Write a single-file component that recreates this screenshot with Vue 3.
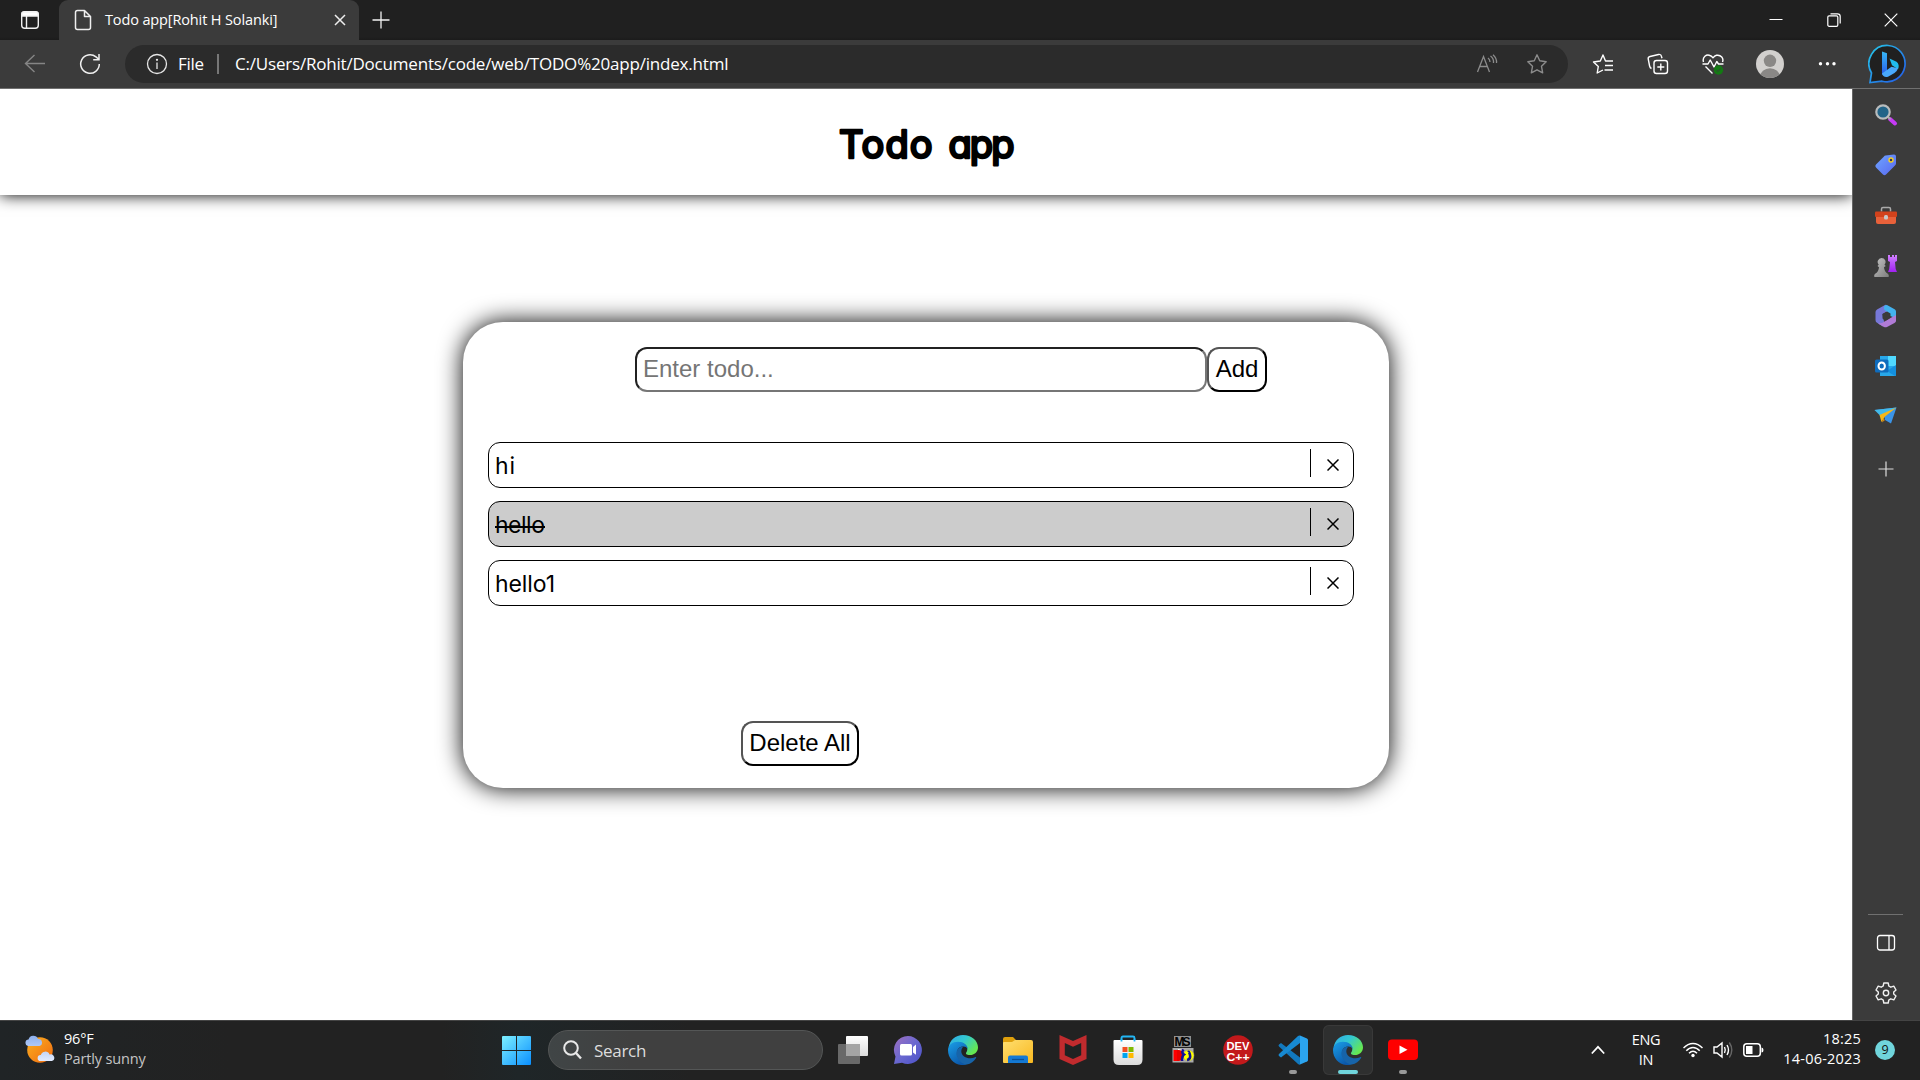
<script setup>
import { ref } from 'vue'

const todos = ref([
  { text: 'hi', done: false, width: 20 },
  { text: 'hello', done: true, width: 50 },
  { text: 'hello1', done: false, width: 60 },
])
</script>

<template>
  <div class="screen">
    <svg class="defs" width="0" height="0">
      <defs>
        <linearGradient id="win" x1="0" y1="0" x2="1" y2="1"><stop offset="0" stop-color="#7df0ff" /><stop offset="1" stop-color="#0a8fff" /></linearGradient>
        <linearGradient id="sun" x1="0" y1="0" x2="1" y2="1"><stop offset="0" stop-color="#fbb020" /><stop offset="1" stop-color="#f06a10" /></linearGradient>
        <linearGradient id="cloud" x1="0" y1="0" x2="0" y2="1"><stop offset="0" stop-color="#8db0ee" /><stop offset="1" stop-color="#e2ebff" /></linearGradient>
        <linearGradient id="edgeTop" x1="0" y1="0" x2="1" y2=".6"><stop offset="0" stop-color="#2fa8e8" /><stop offset=".5" stop-color="#33c8d0" /><stop offset="1" stop-color="#66e850" /></linearGradient>
        <linearGradient id="edgeLow" x1="0" y1="0" x2=".6" y2="1"><stop offset="0" stop-color="#1a9fe8" /><stop offset="1" stop-color="#0b56a8" /></linearGradient>
        <linearGradient id="chat" x1="0" y1="0" x2="1" y2="1"><stop offset="0" stop-color="#a070c0" /><stop offset=".5" stop-color="#6a68d0" /><stop offset="1" stop-color="#4a50c8" /></linearGradient>
        <linearGradient id="fold" x1="0" y1="0" x2="1" y2="1"><stop offset="0" stop-color="#ffdf70" /><stop offset="1" stop-color="#f8b820" /></linearGradient>
        <linearGradient id="tag" x1="0" y1="0" x2="1" y2="1"><stop offset="0" stop-color="#6fa6ff" /><stop offset="1" stop-color="#5867f0" /></linearGradient>
        <linearGradient id="bing" x1="0" y1="0" x2="1" y2="1"><stop offset="0" stop-color="#25c8e8" /><stop offset="1" stop-color="#2458e8" /></linearGradient>
        <linearGradient id="bl" x1="0" y1="0" x2="0" y2="1"><stop offset="0" stop-color="#36b8f5" /><stop offset="1" stop-color="#2a5cea" /></linearGradient>
        <linearGradient id="purple" x1="0" y1="0" x2="0" y2="1"><stop offset="0" stop-color="#d080ff" /><stop offset="1" stop-color="#a020f0" /></linearGradient>
        <linearGradient id="pawn" x1="0" y1="0" x2="1" y2="1"><stop offset="0" stop-color="#c4c4c4" /><stop offset="1" stop-color="#7d7d7d" /></linearGradient>
        <linearGradient id="sheet" x1="0" y1="0" x2="0" y2="1"><stop offset="0" stop-color="#fff" /><stop offset="1" stop-color="#dcdcdc" /></linearGradient>
        <symbol id="edge" viewBox="0 0 30 30">
          <path d="M.6 12.6C1.600 5.200 7.500 0 15 0c8.700 0 15 6 15 12.200 0 4.700-3.600 7.800-8.200 7.800-3.300 0-4.600-1.300-3.400-2.700 2.300-3 .6-9.500-7-9.800C6.600 7.300 2.200 9.600.6 12.600Z" fill="url(#edgeTop)" />
          <path d="M0 15c0-4.800 4.500-8.200 10-8.200 6 0 9.500 3.300 9.800 7.200-1-1.700-2.500-2.500-4.300-2.500C9 11.500 7 18 11.200 24c2 2.900 4.600 4.800 7.300 5.600C8.500 32 0 25 0 15Z" fill="url(#edgeLow)" />
          <path d="M15.500 11.500C10 12 7 16.500 9 21.500c1.700 4.700 6 8 9.800 8.100 4-1 7.400-3.400 9.300-6.700.4-.8-.3-1-1-.6C21 25 13.500 22 13.300 16.500c0-2 .8-3.700 2.200-5Z" fill="#1764a9" />
        </symbol>
      </defs>
    </svg>

    <header class="tabs">
      <div class="spaces">
        <svg width="20" height="20" viewBox="0 0 20 20" fill="none" stroke="#f2f2f2" stroke-width="1.4"><rect x="1.700" y="1.700" width="16.600" height="16.600" rx="3" /><path d="M2 3.500Q2 2 4 2h12q2 0 2 1.500V6H2Z" fill="#fff" /><path d="M6.500 6v12" /></svg>
      </div>
      <div class="tab">
        <svg width="18" height="22" viewBox="0 0 18 22" fill="none" stroke="#eee" stroke-width="1.500" stroke-linejoin="round"><path d="M3.500 1.500h7l6 6v11q0 2-2 2h-11q-2 0-2-2v-15q0-2 2-2ZM10.500 1.500v6h6" /></svg>
        <span class="title">Todo app[Rohit H Solanki]</span>
        <svg class="x" width="12" height="12" viewBox="0 0 12 12" stroke="#eee" stroke-width="1.500"><path d="m1 1 10 10M11 1 1 11" /></svg>
      </div>
      <svg class="new" width="18" height="18" viewBox="0 0 18 18" stroke="#f2f2f2" stroke-width="1.300"><path d="M9 .5v17M.5 9h17" /></svg>
      <div class="winbtns">
        <svg width="14" height="14" viewBox="0 0 14 14"><path d="M.5 6.500h13" stroke="#fff" stroke-width="1" /></svg>
        <svg width="14" height="14" viewBox="0 0 14 14" fill="none" stroke="#fff" stroke-width="1.200"><rect x=".8" y="2.800" width="10" height="10.500" rx="1.300" /><path d="M3.500.8h7q2.700 0 2.700 2.700v7" /></svg>
        <svg width="14" height="14" viewBox="0 0 14 14" stroke="#fff" stroke-width="1.200"><path d="m.7.7 12.600 12.600M13.300.7.7 13.300" /></svg>
      </div>
    </header>

    <nav class="toolbar">
      <svg class="back" width="22" height="20" viewBox="0 0 22 20" fill="none" stroke="#858585" stroke-width="1.400"><path d="M21 9.500H1.500M10.500 1 1.500 9.500l9 8.500" /></svg>
      <svg class="reload" width="22" height="22" viewBox="0 0 22 22" fill="none" stroke="#f0f0f0" stroke-width="1.500"><path d="M20.300 11A9.300 9.300 0 1 1 17 3.900L20 6.500M20 1v5.800h-5.800" /></svg>
      <div class="address">
        <svg class="info" width="22" height="22" viewBox="0 0 22 22" fill="none" stroke="#e6e6e6" stroke-width="1.300"><circle cx="11" cy="11" r="9.500" /><path d="M11 9.500V16" /><circle cx="11" cy="6.800" r=".5" fill="#e6e6e6" /></svg>
        <span class="file">File</span>
        <i class="bar"></i>
        <span class="url">C:/Users/Rohit/Documents/code/web/TODO%20app/index.html</span>
        <svg class="read" width="22" height="20" viewBox="0 0 22 20" fill="none" stroke="#8c8c8c" stroke-width="1.300"><path d="m1.500 18 6-15.500 6 15.500M3.700 12.500h7.600M12 4q2 1.500 2 4M14.500 2q3.500 2.500 3 7M17 .8q4 3.500 3.500 8.200" /></svg>
        <svg class="fav" width="22" height="22" viewBox="0 0 24 24" fill="none" stroke="#8c8c8c" stroke-width="1.500" stroke-linejoin="round"><path d="m12 2 3 6.500 7 1-5.100 5 1.300 7.200L12 18.300l-6.200 3.400 1.300-7.200L2 9.500l7-1Z" /></svg>
      </div>
      <div class="tools">
        <svg width="22" height="22" viewBox="0 0 22 22" fill="none" stroke="#fff" stroke-width="1.400" stroke-linejoin="round"><path d="M21 8h-7.500L11 2 8.300 8l-6.800 1L6.300 13.500 5.200 20l5.800-3M13 12.500h8M12.500 17H21" /></svg>
        <svg width="22" height="22" viewBox="0 0 22 22" fill="none" stroke="#fff" stroke-width="1.400"><rect x="7" y="7.500" width="13.500" height="13" rx="2.500" /><path d="M13.800 10.500v7M10.300 14h7M4.500 15.500Q3 15 2.600 13L1.200 6Q.9 4 3 3.500L11.500 1.500Q14 1 14.500 3.500L15 5.200" /></svg>
        <svg width="22" height="22" viewBox="0 0 22 22" fill="none" stroke="#fff" stroke-width="1.400" stroke-linejoin="round"><path d="M1.500 9C0 4 4.500 1 8 2.500q1.800.7 3 2.300Q12.500 2.800 14.500 2.300C19 1.500 22 5.500 20.500 9M.5 11H6l2.200-4L12 14l2.800-5.500L16.500 11h5M3.500 13.500l7 7" /><circle cx="16.500" cy="17" r="4.700" fill="#137a13" stroke="none" /><path d="m14.300 17 1.600 1.500 2.800-3" stroke="#3b3b3b" stroke-width="1" /></svg>
        <svg class="avatar" width="28" height="28" viewBox="0 0 28 28"><defs><clipPath id="av"><circle cx="14" cy="14" r="14" /></clipPath></defs><g clip-path="url(#av)"><path d="M0 0h28v28H0z" fill="#d2d0ce" /><circle cx="14" cy="10.800" r="6.200" fill="#8a8886" /><ellipse cx="14" cy="27" rx="10" ry="8.800" fill="#8a8886" /></g></svg>
        <svg width="18" height="6" viewBox="0 0 18 6" fill="#fff"><circle cx="2.500" cy="2.700" r="1.700" /><circle cx="9.500" cy="2.700" r="1.700" /><circle cx="16" cy="2.700" r="1.700" /></svg>
        <svg class="bing" width="40" height="40" viewBox="0 0 40 40"><path d="M20 1.500A18.200 18.200 0 1 1 14 37.200L2 38.500 3.500 29A18.200 18.200 0 0 1 20 1.500Z" fill="#202020" stroke="url(#bing)" stroke-width="1.700" /><path d="M14 7.500 19 9.300v18L14 31Z" fill="url(#bl)" /><path d="m21.500 14.500 7 3.200q3.500 3 1.500 7.500l-6-4Z" fill="#20bdf0" /><path d="m14 29.500 9.500-6.800 6.600 1.500q-1 3-3.600 4.700L20 32.700q-5 1-6-3.200Z" fill="#49a9fb" /></svg>
      </div>
    </nav>

    <div class="middle">
      <main class="page">
        <div class="heading">
          <h1><svg width="184" height="60" viewBox="0 0 184 60" aria-label="Todo app"><text x="5" y="40" textLength="93.500" class="word">Todo</text><text x="114.500" y="40" textLength="66" class="word">app</text></svg></h1>
        </div>
        <section class="card">
          <div class="entry">
            <input type="text" placeholder="Enter todo..." />
            <button>Add</button>
          </div>
          <ul>
            <li v-for="t in todos" :key="t.text" :class="{ done: t.done }">
              <svg class="label" width="120" height="36"><text x="0" y="25" :textLength="t.width">{{ t.text }}</text><path v-if="t.done" :d="`M0 19h${t.width}`" /></svg>
              <span class="remove"><svg width="12" height="12" viewBox="0 0 12 12"><path d="m.5.5 11 11M11.500.5l-11 11" stroke="#000" stroke-width="1.500" /></svg></span>
            </li>
          </ul>
          <button class="clear">Delete All</button>
        </section>
      </main>

      <aside class="side">
        <svg width="24" height="24" viewBox="0 0 24 24"><path d="m16 16 5 4.500" stroke="#c63af5" stroke-width="4" stroke-linecap="round" /><path d="m13.500 13.500 3 2.800" stroke="#aaa" stroke-width="2" /><circle cx="9" cy="9" r="6.700" fill="#226488" stroke="#b9bcbd" stroke-width="2.200" /></svg>
        <svg width="24" height="24" viewBox="0 0 24 24"><path d="M11.500 2.500 20 1.500q2 0 2 2v7q0 1-1 2l-9 9q-1.500 1.500-3 0L2 14.500q-1.500-1.500 0-3l8-8q.5-.8 1.500-1Z" fill="url(#tag)" /><circle cx="17" cy="7" r="2" fill="#303060" stroke="#f5d020" stroke-width="1.400" /></svg>
        <svg width="24" height="24" viewBox="0 -1 24 24"><path d="M7.500 7.500V5q0-1.500 1.500-1.500h6Q16.500 3.500 16.500 5v2.500" fill="none" stroke="#aaa" stroke-width="1.500" /><path d="M2 12h20v6q0 2-2 2H4q-2 0-2-2Z" fill="#e8613a" /><path d="M1 8.500q0-1 1-1h20q1 0 1 1V12q0 1-1 1H2q-1 0-1-1Z" fill="#d2421c" /><rect x="10" y="11" width="4" height="4.500" rx="1.500" fill="#c8c8c8" /></svg>
        <svg width="24" height="24" viewBox="0 0 24 24"><path d="M14 1h2v2h2V1h2v2h1V1h2v6l-2 1 .7 7 1.300 3h-9l1.200-3 .8-7-2-1Z" fill="url(#purple)" /><path d="M7.500 4a4 4 0 0 1 3 6.700l1.300 1.300-1.800 1.200q.3 4.300 3.500 6.300 2 1.500 1 3.500h-14q-1-2 1-3.500 3.200-2 3.500-6.300L3.500 12l1.200-1.300A4 4 0 0 1 7.500 4Z" fill="url(#pawn)" /></svg>
        <svg width="24" height="24" viewBox="0 0 24 24"><path d="M11 1 3 5.500Q1.500 6.500 1.500 8v8q0 2 1.500 2.800l6 3.700q2-4 .3-7.500L8.500 10 13 7.500V2Q12.500 0 11 1Z" fill="#7778d8" /><path d="m11 1.500 2-.5 8 4.500q1 .8 1 2v7L16.500 12V9.500L10.500 6Q9 3 11 1.500Z" fill="#42b2ee" /><path d="M22 11v6q0 1-1.500 2l-7.500 4q-1.500.7-3 0L4 19.500l4-.5 8.500-5Z" fill="#b07bd6" /><path d="M12 8 15.500 10v4.500L12 16.500 8.500 14.500V10Z" fill="#3b3b3b" /></svg>
        <svg width="24" height="24" viewBox="0 0 24 24"><path d="M6 2h15q1 0 1 1v18q0 1-1 1H6Z" fill="#28a8ea" /><path d="M14 2h8v10h-8Z" fill="#50d9ff" /><path d="m13 17 9-6v10q0 1-1 1Z" fill="#1490df" /><rect x="1" y="5.500" width="13.500" height="13" rx="1.500" fill="#0f6cbd" /><ellipse cx="7.700" cy="12" rx="3.200" ry="3.600" fill="none" stroke="#fff" stroke-width="2" /></svg>
        <svg width="24" height="24" viewBox="0 0 24 24"><path d="M.5 6 22.500 3.500 17 19.500 11 16 10 10Z" fill="#3b94e8" /><path d="M.5 6 22.500 3.500 6 11.500Z" fill="#42b9ea" /><path d="M22.500 3.500 5.500 11l2 7L11 12.500Z" fill="#f7b716" /><path d="m9 14.500-1 4 3-2.500Z" fill="#d88b12" /></svg>
        <svg class="plus" width="16" height="16" viewBox="0 0 16 16" stroke="#ddd" stroke-width="1.200"><path d="M8 .5v15M.5 8h15" /></svg>
        <div class="bottom">
          <svg width="20" height="18" viewBox="0 0 20 18" fill="none" stroke="#fff" stroke-width="1.300"><rect x="1.500" y="1.500" width="17" height="14.500" rx="2.500" /><path d="M13 1.500V16" /></svg>
          <svg width="22" height="22" viewBox="0 0 22 22" fill="none" stroke="#f0f0f0" stroke-width="1.400" stroke-linejoin="round"><circle cx="11" cy="11" r="2.700" /><path d="M8.800 1h4.400l.6 3 2 1.200 3-1 2.200 3.800L18.700 10v2l2.300 2-2.200 3.800-3-1-2 1.200-.6 3H8.800l-.6-3-2-1.200-3 1L1 14l2.300-2v-2L1 8l2.200-3.800 3 1L8.200 4Z" /></svg>
        </div>
      </aside>
    </div>

    <footer class="taskbar">
      <div class="weather">
        <svg width="30" height="30" viewBox="0 0 30 30"><circle cx="15" cy="15" r="12.800" fill="url(#sun)" /><path d="M3 11A3.300 3.300 0 0 1 3.500 4.500 5 5 0 0 1 13 4a3.600 3.600 0 0 1 1.500 7ZM15.500 26a3 3 0 0 1 .3-6 4.600 4.600 0 0 1 8.700-.5 3.300 3.300 0 0 1 2.500 6.500Z" fill="url(#cloud)" /></svg>
        <div class="report"><b>96°F</b><span>Partly sunny</span></div>
      </div>
      <svg class="start" width="29" height="29" viewBox="0 0 29 29" fill="url(#win)"><path d="M1 0h13v14H0V1Q0 0 1 0ZM15 0h13q1 0 1 1v13H15ZM0 15h14v14H1q-1 0-1-1ZM15 15h14v13q0 1-1 1H15Z" /></svg>
      <div class="search">
        <svg width="19" height="20" viewBox="0 0 19 20" fill="none" stroke="#e8e8e8" stroke-width="2"><circle cx="8" cy="8" r="6.800" /><path d="m13 13 5 5.500" stroke-width="2.400" /></svg>
        <span>Search</span>
      </div>
      <div class="apps">
        <div class="app"><svg width="30" height="30" viewBox="0 0 30 30"><rect x="8" y="1" width="22" height="20" rx="1" fill="url(#sheet)" /><rect y="9" width="22" height="20" rx="1" fill="#696969" /><path d="M8 9h14v12H8Z" fill="#a5a5a5" /></svg></div>
        <div class="app"><svg width="30" height="30" viewBox="0 0 30 30"><path d="M15 1a14 14 0 1 1-6 26.700L1 29l1.500-7.500A14 14 0 0 1 15 1Z" fill="url(#chat)" /><rect x="7" y="9" width="12" height="11.500" rx="1.500" fill="#fff" /><path d="m20 12 3-2.500v10.300L20 17.500Z" fill="#fff" /></svg></div>
        <div class="app"><svg width="30" height="30"><use href="#edge" /></svg></div>
        <div class="app"><svg width="30" height="30" viewBox="0 0 30 30"><path d="M0 4q0-2 2-2h8l3 3h15v9H0Z" fill="#dfa00c" /><path d="M0 8q0-1 1-1h8l3-2h16q2 0 2 2v20q0 1-1 1H1q-1 0-1-1Z" fill="url(#fold)" /><path d="M5 28v-5.500q0-2 2-2h16q2 0 2 2V28Z" fill="#1479d4" /><path d="M9 24.500h12" stroke="#0b4f94" stroke-width="1.300" /></svg></div>
        <div class="app"><svg width="30" height="30" viewBox="0 0 30 30"><path d="m1.500 0 13.500 6 13.500-6v24L15 30 1.500 24Z" fill="#c12b2e" /><path d="m6.800 8 8.200 3.700L23.200 8v12.300L15 24l-8.200-3.700Z" fill="#202222" /></svg></div>
        <div class="app"><svg width="30" height="30" viewBox="0 0 30 30"><path d="M8.500 7V3q0-1.500 1.500-1.500h10q1.500 0 1.500 1.500v4" fill="none" stroke="#22b6f4" stroke-width="1.800" /><path d="M.5 6q0-1 1-1h27q1 0 1 1v18.500q0 5.500-5.500 5.500H6Q.5 30 .5 24.500Z" fill="url(#sheet)" /><path d="M8.500 3.500V6.500M21.500 3.500V6.500" stroke="#22b6f4" stroke-width="1.800" /><path d="M9.500 12h5v5h-5Z" fill="#f25022" /><path d="M15.500 12h5v5h-5Z" fill="#7fba00" /><path d="M9.500 18h5v5h-5Z" fill="#00a4ef" /><path d="M15.500 18h5v5h-5Z" fill="#ffb900" /></svg></div>
        <div class="app"><svg width="26" height="30" viewBox="0 0 26 30"><rect x="4" y="1" width="17" height="11" fill="#909090" /><text x="4.500" y="11" textLength="16" class="ms">MS</text><rect x="2.500" y="13" width="21" height="14.500" fill="#aaa" /><path d="M3.500 15H10v11H3.500Z" fill="#f00" /><path d="M8 14q7 1 7 6.500T8 26Z" fill="#fff" /><path d="M7 15h2q5 .5 5 5.500T9 26H7Z" fill="#e80000" /><circle cx="18.500" cy="20.500" r="5.500" fill="#ff0" stroke="#888" stroke-width=".5" /><path d="M12 26q0-5 2-6.500-3-2-.5-5M17 25q4-1 3-5t-2-3" fill="none" stroke="#101098" stroke-width="2.600" /></svg></div>
        <div class="app"><svg width="30" height="30" viewBox="0 0 30 30"><circle cx="15" cy="15" r="14.800" fill="#c2191b" /><text x="3.500" y="14.500" textLength="23" lengthAdjust="spacingAndGlyphs" class="dev">DEV</text><text x="3.500" y="25.500" textLength="23" lengthAdjust="spacingAndGlyphs" class="dev">C++</text></svg></div>
        <div class="app run"><svg width="30" height="30" viewBox="0 0 30 30"><path d="m22 .5 7 3q1 .5 1 1.500v20q0 1-1 1.500l-7 3Z" fill="#2ba4ef" /><path d="M1 9.500 3 8l19 14.500v7.300q-1 .2-2-.8L1 11.500q-1-1 0-2Z" fill="#1278bd" /><path d="M22 .5V8L3 22.500 1 21q-1-1 0-2L20 1q1-.9 2-.5Z" fill="#1789d1" /></svg></div>
        <div class="app active"><svg width="30" height="30"><use href="#edge" /></svg></div>
        <div class="app run"><svg width="30" height="30" viewBox="0 0 30 30"><rect y="4.500" width="30" height="20.500" rx="4" fill="#f00" /><path d="M11.500 10.500v8.500l8-4.250Z" fill="#fff" /></svg></div>
      </div>
      <div class="tray">
        <svg class="chev" width="14" height="10" viewBox="0 0 14 10" fill="none" stroke="#fff" stroke-width="1.700"><path d="m.8 8.500 6.200-6.700 6.200 6.700" /></svg>
        <div class="lang">ENG<br />IN</div>
        <svg class="wifi" width="20" height="16" viewBox="0 0 20 16" fill="none" stroke="#fff" stroke-width="1.500"><path d="M.5 6Q4.800 1.500 10 1.500T19.500 6M3.300 8.700Q6.300 5.400 10 5.400t6.700 3.300M6 11.300q4-4 8 0" /><circle cx="10" cy="13.500" r="1.700" fill="#fff" stroke="none" /></svg>
        <svg class="vol" width="20" height="18" viewBox="0 0 20 18" fill="none" stroke="#fff" stroke-width="1.400"><path d="M1 6v6h3l5 4V2L4 6ZM11.500 6q1.500 3 0 6M14 4q3 5 0 10" /><path d="M16.300 1.500q5 7.500 0 15" stroke="#666" /></svg>
        <svg class="bat" width="21" height="14" viewBox="0 0 21 14"><rect x=".8" y=".8" width="16.500" height="12.400" rx="3" fill="none" stroke="#fff" stroke-width="1.500" /><rect x="3" y="3" width="6.500" height="8" fill="#fff" /><path d="M18.500 4.500q2 0 2 2.500t-2 2.500Z" fill="#fff" /></svg>
        <div class="clock">18:25<br />14-06-2023</div>
        <span class="badge">9</span>
      </div>
    </footer>
  </div>
</template>

<style>
body { margin: 0; overflow: hidden; background: #202020; }
</style>

<style scoped>
* { box-sizing: border-box; }
svg { display: block; flex: none; }
.defs { position: absolute; }
.screen { width: 1920px; height: 1080px; display: flex; flex-direction: column; overflow: hidden; font-family: "Open Sans", "Noto Sans", sans-serif; color: #fff; background: #3b3b3b; }
.tabs { height: 40px; flex: none; display: flex; align-items: center; background: linear-gradient(#202020 37px, #1b1b1b); }
.spaces { width: 59px; height: 40px; padding-left: 20px; display: flex; align-items: center; }
.tab { width: 300px; height: 40px; background: #3b3b3b; border-radius: 9px 9px 0 0; display: flex; align-items: center; padding: 0 13px 0 15px; }
.title { margin-left: 13px; padding-bottom: 1px; font-size: 14.500px; letter-spacing: -.13px; white-space: nowrap; }
.tab .x { margin-left: auto; }
.new { margin-left: 13px; }
.winbtns { margin-left: auto; padding-right: 22px; display: flex; gap: 43.500px; }

.toolbar { height: 49px; flex: none; display: flex; align-items: center; border-bottom: 1px solid #707070; background: #3b3b3b; }
.back { margin-left: 24px; }
.reload { margin-left: 33px; }
.address { margin-left: 24px; width: 1443px; height: 38px; border-radius: 19px; background: #2b2b2b; display: flex; align-items: center; font-size: 17px; }
.info { margin-left: 21px; }
.file { width: 39px; margin-left: 10px; padding-bottom: 2px; letter-spacing: -.3px; }
.bar { width: 2px; height: 20px; background: #777; }
.url { margin-left: 16px; padding-bottom: 2px; letter-spacing: -.2px; white-space: nowrap; }
.read { margin-left: auto; }
.fav { margin: 0 20px 0 28px; }
.tools { flex: 1; display: flex; align-items: center; padding-left: 24px; gap: 33px; }
.tools .avatar { margin-left: -1px; margin-right: 1px; }
.bing { margin-left: -1px; }

.middle { height: 931px; flex: none; display: flex; }
.page { width: 1852px; background: #fff; color: #000; overflow: hidden; }
.heading { height: 106px; box-shadow: 0 0 15px #000; display: flex; justify-content: center; }
h1 { margin: 29px 0 0; }
h1 svg { overflow: visible; }
.word { font: 400 38px Inter, sans-serif; font-feature-settings: "cv11"; stroke: #000; stroke-width: 2.600px; stroke-linejoin: round; }
.card { width: 926px; height: 466px; margin: 127px auto 0; border-radius: 40px; box-shadow: 0 0 25px #000; padding: 25px; display: flex; flex-direction: column; }
.entry { margin-left: 147px; display: flex; }
input, button { font: 24px "Liberation Sans", Arial, sans-serif; height: 45px; flex: none; border-radius: 12px; background: #fff; color: #000; }
input { width: 572px; padding: 1px 6px 2px; border: 2px inset #767676; }
input::placeholder { color: #757575; }
button { width: 60px; padding: 0 0 2px; border: 2px outset #000; white-space: nowrap; }
ul { list-style: none; margin: 50px 0 0; padding: 0; width: 866px; display: flex; flex-direction: column; gap: 13px; }
li { height: 46px; flex: none; border: 1px solid #000; border-radius: 12px; padding: 6px; display: flex; justify-content: space-between; }
li.done { background: #ccc; }
.label text { font: 400 23px Inter, sans-serif; font-feature-settings: "cv11"; }
.label path { stroke: #000; stroke-width: 2px; }
.remove { width: 37px; height: 28px; border-left: 1px solid #000; padding: 9.500px 0 0 15.500px; }
.clear { width: 118px; margin: 115px 0 0 253px; }

.side { width: 68px; border-left: 1px solid #666; display: flex; flex-direction: column; align-items: center; padding: 14px 2px 0 0; gap: 26.200px; }
.side .plus { margin-top: 7px; }
.bottom { margin-top: auto; width: 35px; height: 106px; border-top: 1px solid #707070; display: flex; flex-direction: column; align-items: center; padding-top: 19px; gap: 30px; }

.taskbar { height: 60px; flex: none; display: flex; align-items: center; box-shadow: inset 0 1px #444; background: linear-gradient(90deg, #202426, #222 12%, #222 23%, #1f2628 27%, #222 36%); }
.weather { width: 502px; padding-left: 25px; display: flex; align-items: center; gap: 9px; font-size: 14.500px; line-height: 20px; letter-spacing: -.2px; }
.report { padding-bottom: 2px; }
.weather b, .weather span { display: block; font-weight: 400; }
.weather span { color: #c5c5c5; letter-spacing: -.15px; }
.search { width: 275px; height: 40px; margin-left: 17px; border: 1px solid #545656; border-radius: 20px; background: linear-gradient(90deg, #404546, #404040 30%); display: flex; align-items: center; padding-left: 14px; gap: 12px; font-size: 17px; color: #ddd; letter-spacing: -.3px; }
.apps { display: flex; margin-left: 5px; }
.app { width: 50px; height: 50px; margin-right: 5px; border-radius: 6px; display: flex; align-items: center; justify-content: center; position: relative; }
.app.active { background: #2e2f2f; box-shadow: inset 0 0 0 1px #393939; }
.run::after, .active::after { content: ""; position: absolute; bottom: 1px; width: 8px; height: 4px; border-radius: 2px; background: #999; }
.active::after { width: 20px; background: #70d5dc; }
.ms { font: 700 12px "Liberation Sans", sans-serif; fill: #000; }
.dev { font: 700 10.500px "Liberation Sans", sans-serif; fill: #fff; }
.tray { margin-left: auto; display: flex; align-items: center; font-size: 14.500px; line-height: 20px; padding-right: 25px; }
.lang { width: 42px; margin-left: 20px; text-align: center; letter-spacing: -.3px; }
.wifi { margin-left: 16px; }
.vol { margin-left: 10px; }
.bat { margin-left: 10px; }
.clock { width: 97px; padding-bottom: 2px; text-align: right; letter-spacing: .2px; }
.badge { width: 20px; height: 20px; margin-left: 14px; border-radius: 50%; background: #70d5dc; color: #111; font-size: 12.500px; text-align: center; }
</style>
